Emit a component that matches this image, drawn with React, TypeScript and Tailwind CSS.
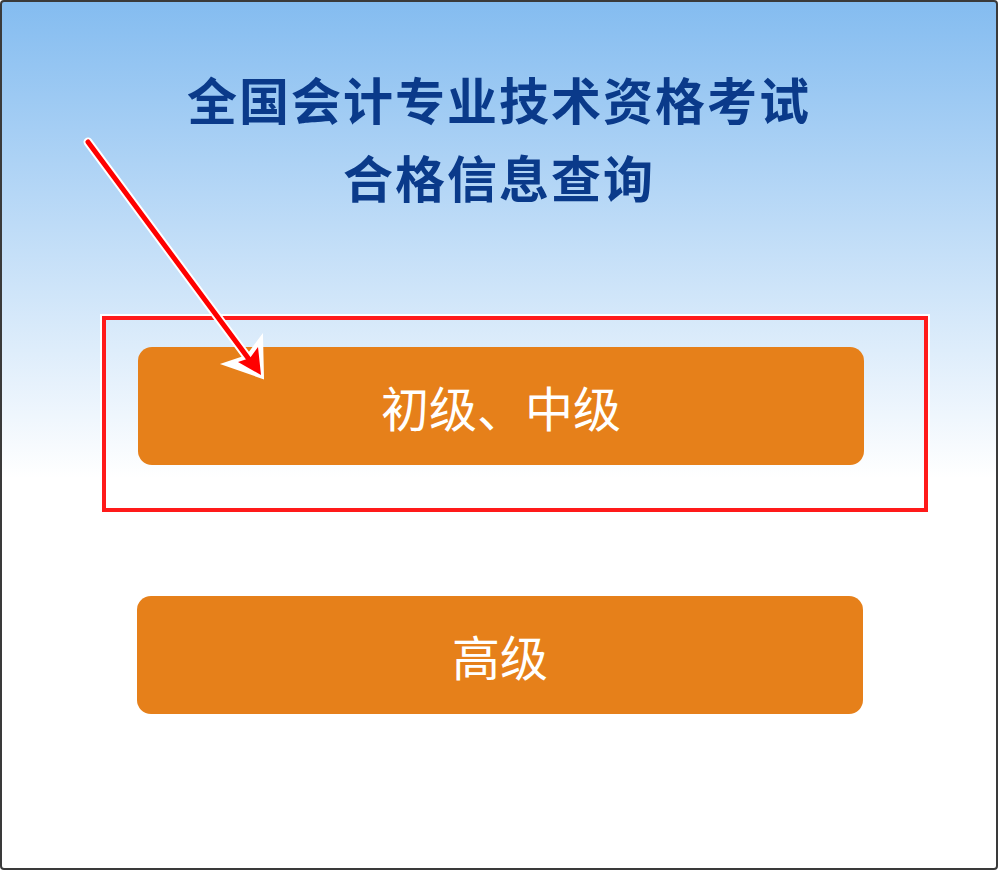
const cjk = { fontFamily: '"Noto Sans CJK SC", "Noto Sans", sans-serif' };

// Pointer arrow drawn over the page, aimed at the first button
const Arrow = () => (
  <svg
    className="absolute inset-0 pointer-events-none"
    width={1000}
    height={870}
    viewBox="0 0 1000 870"
  >
    <line x1={88} y1={142} x2={254} y2={366} stroke="#ffffff" strokeWidth={9} strokeLinecap="round" />
    <polygon
      points="263,378 223,364 247,356 262,336"
      fill="#ffffff"
      stroke="#ffffff"
      strokeWidth={2}
      strokeLinejoin="miter"
    />
    <line x1={88} y1={142} x2={254} y2={366} stroke="#ff0000" strokeWidth={5} strokeLinecap="round" />
    <polygon points="261,375 238,362 250,358 258,347" fill="#ff0000" />
  </svg>
);

const LevelButton = ({ label }: { label: string }) => (
  <button
    className="w-[726px] h-[118px] rounded-[14px] bg-[#e6801a] text-white text-[48px] font-normal leading-none flex items-center justify-center"
    style={cjk}
  >
    {label}
  </button>
);

export default function App() {
  return (
    <div className="relative w-[1000px] h-[870px] bg-white">
      <div className="w-[998px] h-[870px] border-2 border-[#3a3a3a] rounded-[4px] bg-[linear-gradient(to_bottom,#84bcf0_0%,#ffffff_55%)] flex flex-col items-center">
        {/* Title */}
        <div
          className="mt-[57px] text-[50px] leading-[78px] font-bold text-[#0a3a8a] text-center tracking-[2px]"
          style={cjk}
        >
          <div>全国会计专业技术资格考试</div>
          <div>合格信息查询</div>
        </div>

        {/* Highlighted first option */}
        <div className="mt-[101px] ml-[32px] w-[826px] border-4 border-[#ff1a1a] pt-[27px] pb-[43px] pl-[32px] shadow-[0_0_0_2px_#ffffff]">
          <LevelButton label="初级、中级" />
        </div>

        <div className="mt-[84px] ml-[2px]">
          <LevelButton label="高级" />
        </div>
      </div>
      <Arrow />
    </div>
  );
}
